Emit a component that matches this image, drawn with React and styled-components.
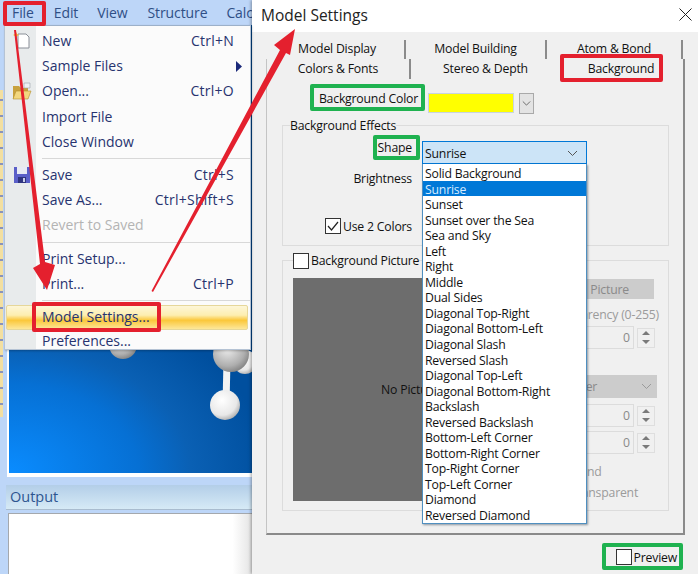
import React from "react";
import styled, { createGlobalStyle } from "styled-components";

const Global = createGlobalStyle`
  html, body { margin: 0; padding: 0; background: #f0f0f0; }
  * { box-sizing: border-box; }
  body { font-family: "Open Sans", "Noto Sans", "Liberation Sans", sans-serif; }
`;

const Page = styled.div`
  position: relative; width: 698px; height: 574px; overflow: hidden; display: flex;
`;
const LeftPane = styled.div`
  position: relative; width: 252px; flex: none; background: #bdd6f8; display: flex; flex-direction: column;
`;
const MenuBar = styled.div`
  height: 25px; flex: none; display: flex; align-items: center; padding-left: 12px; overflow: hidden; white-space: nowrap;
`;
const BarItem = styled.span`
  font-size: 14px; color: #2f4f86; letter-spacing: -0.1px; margin-right: ${p => p.$gap}px; flex: none;
`;
const Workspace = styled.div`
  height: 452px; flex: none; display: flex;
`;
const Strip = styled.div`
  width: 3px; height: 327px; margin-top: 65px; flex: none;
  background: repeating-linear-gradient(180deg, #f3dfa0 0 9px, #8a93b8 9px 11px, #f3dfa0 11px 16px);
`;
const Frame = styled.div`
  flex: 1; margin-left: 4px; border: solid #fff; border-width: 0 0 4px 2px; display: flex;
  background: radial-gradient(ellipse 260px 180px at 0% 100%, #0a8cff 0%, #0670d4 50%, #0a60b4 70%, #004f9e 100%) #004f9e;
`;
const Molecule = styled.svg`
  width: 100%; height: 100%; display: block;
`;
const OutputHead = styled.div`
  margin: 8px 0 0 6px; height: 25px; flex: none; padding: 0 0 2px 4px; display: flex; align-items: center;
  background: linear-gradient(180deg, #b3cee8, #d6eaf6); border-bottom: 1px solid #a9bccf;
  font-size: 14.5px; color: #2e5590;
`;
const OutputBox = styled.div`
  margin: 3px 0 0 8px; flex: 1; background: linear-gradient(90deg, #fff 92%, #e4e4e4 100%);
  border: 1px solid #a4a8ad; border-right: 0; border-bottom: 0;
`;

const Menu = styled.div`
  position: absolute; left: 4px; top: 25px; width: 247px; height: 325px; padding-top: 3px; overflow: hidden; z-index: 2;
  background: linear-gradient(90deg, #e8ebec 0 31px, #fbfbfb 31px);
  border: 1px solid #b5c3d4; border-top-color: #9cb0c9;
  box-shadow: 1px 1px 2px rgba(0,0,0,.25);
`;
const Row = styled.div`
  position: relative; height: 25.2px; display: flex; align-items: center; justify-content: space-between;
  padding: 0 16px 2px 37px; font-size: 14px;
  color: ${p => (p.$off ? "#b4b4b4" : "#27336f")};
  ${p => p.$hot && `
    margin: 0 2px 0 1px; padding-left: 35px; padding-right: 13px;
    background: linear-gradient(180deg, #fdf6d8 0%, #fdeeb0 40%, #fbc73a 62%, #fde79a 100%);
    border: 1px solid #e6d79a; border-radius: 2px;
  `}
  ${p => p.$last && "height: 19px; line-height: 17px; padding-top: 2px; padding-bottom: 0;"}
`;
const Key = styled.span`
  letter-spacing: 0.25px;
`;
const MenuIcon = styled.svg`
  position: absolute; left: 7px; top: 2px; width: 20px; height: 20px;
`;
const SubArrow = styled.svg`
  position: absolute; right: 7px; top: 7px; width: 8px; height: 11px;
`;
const Sep = styled.div`
  height: 8px; margin-left: 37px; display: flex; align-items: center;
  &::after { content: ""; flex: 1; height: 1px; background: #d8d8d8; }
`;

const Dialog = styled.div`
  flex: 1; display: flex; flex-direction: column; background: #f0f0f0; box-shadow: -1px 0 3px rgba(0,0,0,.35); z-index: 1;
`;
const TitleBar = styled.div`
  height: 32px; flex: none; background: #fff; display: flex; align-items: center; justify-content: space-between;
  padding: 0 6px 3px 9px; font-size: 15.5px; color: #222;
`;
const CloseIcon = styled.svg`
  width: 13px; height: 13px;
`;
const Tabs = styled.div`
  margin: 8px 0 0 14px; width: 419px; flex: none;
`;
const TabRow = styled.div`
  display: flex; height: ${p => p.$h}px; padding-left: ${p => p.$indent}px;
`;
const Tab = styled.div`
  width: ${p => p.$w}px; flex: none; display: flex; align-items: center; justify-content: center;
  font-size: 12.25px; color: #111; letter-spacing: -0.2px; padding-bottom: ${p => p.$lift}px;
  ${p => p.$bar && "border-right: 2px solid #8b8b8b;"}
`;
const Panel = styled.div`
  width: 419px; height: 476px; border: solid #8a8a8a; border-width: 0 2px 2px 1px; border-left-color: #c4c4c4;
`;
const ColorRow = styled.div`
  display: flex; align-items: center; margin: 14px 0 0 15px; height: 20px;
`;
const FieldLabel = styled.div`
  width: ${p => p.$w}px; flex: none; text-align: right; font-size: 12.25px; color: #111; letter-spacing: -0.2px; white-space: nowrap;
  padding-bottom: ${p => p.$lift || 0}px;
`;
const Swatch = styled.div`
  width: 86px; height: 20px; margin-left: 10px; background: #ffff00; border: 1px solid #c8d4de;
`;
const ColorButton = styled.div`
  width: 15px; height: 21px; margin-left: 5px; display: flex; align-items: center; justify-content: center;
  background: #e3e3e3; border: 1px solid #a9a9a9;
`;
const Group = styled.fieldset`
  margin: ${p => p.$top}px 16px 0 15px; padding: ${p => p.$pad}; border: 1px solid #dcdcdc; min-width: 0; width: 387px;
`;
const Legend = styled.legend`
  margin-left: ${p => p.$left}px; padding: 2px 0 0; font-size: 12.25px; line-height: 16px; color: #111; letter-spacing: -0.2px;
  display: flex; align-items: center; gap: 2px; white-space: nowrap;
`;
const Check = styled.span`
  width: 16px; height: 16px; flex: none; background: #fff; border: 1px solid #333; display: inline-flex; align-items: center; justify-content: center;
`;
const FormRow = styled.div`
  display: flex; align-items: center; margin-top: ${p => p.$top}px; height: ${p => p.$h}px;
`;
const Combo = styled.div`
  position: relative; width: 165px; height: 23px; margin-left: 10px; flex: none;
  background: #cce4f7; border: 1px solid #0078d7; display: flex; align-items: center; justify-content: space-between;
  padding: 2px 8px 0 2px; font-size: 12.25px; color: #111; letter-spacing: -0.2px;
`;
const List = styled.div`
  position: absolute; left: -1px; top: 22px; width: 165px; z-index: 3; background: #fff; padding-top: 1px;
  border: 1px solid #4f8fc0; border-top: 0; box-shadow: 1px 1px 2px rgba(40,60,80,.5);
`;
const Option = styled.div`
  height: 15.55px; line-height: 17.5px; padding-left: 2px; font-size: 12.25px; letter-spacing: -0.2px; white-space: nowrap;
  color: ${p => (p.$sel ? "#d8ecff" : "#111")}; background: ${p => (p.$sel ? "#0078d7" : "transparent")};
`;
const CheckRow = styled.div`
  display: flex; align-items: center; gap: 2px; margin: 32px 0 0 42px; height: 16px; font-size: 12.25px; color: #111; letter-spacing: -0.2px;
`;
const PictureBody = styled.div`
  display: flex;
`;
const Picture = styled.div`
  width: 234px; height: 223px; flex: none; background: #6d6d6d; display: flex; align-items: center; justify-content: center;
  font-size: 12.25px; color: #111; letter-spacing: -0.2px;
`;
const Side = styled.div`
  width: 122px; margin-left: 8px; flex: none; display: flex; flex-direction: column;
`;
const DisabledButton = styled.div`
  height: 20px; width: 119px; margin-top: 1px; background: #cccccc; display: flex; align-items: center; justify-content: center;
  font-size: 12.25px; color: #8a8a8a; letter-spacing: -0.2px;
`;
const DisabledText = styled.div`
  font-size: 12.25px; line-height: 16px; color: #9b9b9b; letter-spacing: -0.2px; white-space: nowrap;
  margin-top: ${p => p.$top}px; padding-left: ${p => p.$left}px;
`;
const Spinner = styled.div`
  display: flex; align-items: center; gap: 3px; height: 23px; margin-top: ${p => p.$top}px;
`;
const SpinInput = styled.div`
  width: 99px; height: 23px; background: #f0f0f0; border: 1px solid #dcdcdc; display: flex; align-items: center; justify-content: flex-end;
  padding-right: 3px; font-size: 12.25px; color: #8a8a8a;
`;
const SpinButtons = styled.div`
  width: 18px; height: 20px; display: flex; flex-direction: column; border: 1px solid #dedede;
`;
const SpinPart = styled.div`
  flex: 1; display: flex; align-items: center; justify-content: center;
  &::after {
    content: ""; border-left: 4px solid transparent; border-right: 4px solid transparent;
    ${p => (p.$down ? "border-top: 4px solid #7a7a7a;" : "border-bottom: 4px solid #7a7a7a;")}
  }
`;
const DisabledSelect = styled.div`
  height: 23px; width: 122px; margin-top: 26px; background: #cccccc; display: flex; align-items: center; justify-content: space-between;
  padding: 0 5px 0 25px; font-size: 12.25px; color: #8a8a8a; letter-spacing: -0.2px;
`;
const Footer = styled.div`
  flex: 1; display: flex; justify-content: flex-end; align-items: center; padding: 5px 21px 0 0;
  font-size: 12.25px; color: #111; gap: 2px; letter-spacing: -0.2px;
`;

const Overlay = styled.svg`
  position: absolute; inset: 0; width: 698px; height: 574px; z-index: 6; pointer-events: none;
`;
const Mark = styled.div`
  position: absolute; z-index: 5; pointer-events: none;
  left: ${p => p.$x}px; top: ${p => p.$y}px; width: ${p => p.$w}px; height: ${p => p.$h}px;
  border: 4px solid ${p => (p.$green ? "#1fb250" : "#e4202e")}; border-radius: 2px;
`;

const Chevron = ({ color = "#555", w = 11 }) => (
  <svg width={w} height="7" viewBox="0 0 11 7"><path d="M1 1l4.5 4.5L10 1" fill="none" stroke={color} strokeWidth="1" /></svg>
);
const Spin = ({ top }) => (
  <Spinner $top={top}>
    <SpinInput>0</SpinInput>
    <SpinButtons><SpinPart /><SpinPart $down /></SpinButtons>
  </Spinner>
);

const options = ["Solid Background","Sunrise","Sunset","Sunset over the Sea","Sea and Sky","Left","Right","Middle","Dual Sides","Diagonal Top-Right","Diagonal Bottom-Left","Diagonal Slash","Reversed Slash","Diagonal Top-Left","Diagonal Bottom-Right","Backslash","Reversed Backslash","Bottom-Left Corner","Bottom-Right Corner","Top-Right Corner","Top-Left Corner","Diamond","Reversed Diamond"];

export default function App() {
  return (
    <Page>
      <Global />
      <LeftPane>
        <MenuBar>
          <BarItem $gap={20}>File</BarItem>
          <BarItem $gap={19}>Edit</BarItem>
          <BarItem $gap={20}>View</BarItem>
          <BarItem $gap={19}>Structure</BarItem>
          <BarItem $gap={0}>Calc</BarItem>
        </MenuBar>
        <Workspace>
          <Strip />
          <Frame>
            <Molecule viewBox="0 0 243 448" preserveAspectRatio="none">
              <defs>
                <radialGradient id="gray" cx="40%" cy="35%" r="70%">
                  <stop offset="0%" stopColor="#eeeeee" /><stop offset="70%" stopColor="#aeaeae" /><stop offset="100%" stopColor="#7f7f7f" />
                </radialGradient>
                <radialGradient id="white" cx="40%" cy="35%" r="70%">
                  <stop offset="0%" stopColor="#ffffff" /><stop offset="70%" stopColor="#e8e8e8" /><stop offset="100%" stopColor="#a9a9a9" />
                </radialGradient>
              </defs>
              <circle cx="114" cy="320" r="14" fill="url(#gray)" />
              <circle cx="236" cy="337" r="12" fill="url(#white)" />
              <path d="M218 335l-1 45" stroke="#f3f3f3" strokeWidth="7" />
              <circle cx="222" cy="329" r="18" fill="url(#gray)" />
              <circle cx="216" cy="380" r="15" fill="url(#white)" />
            </Molecule>
          </Frame>
        </Workspace>
        <OutputHead>Output</OutputHead>
        <OutputBox />
        <Menu>
          <Row>
            <MenuIcon viewBox="0 0 20 20">
              <path d="M6 3h8l3 3v11H6z" fill="#fff" stroke="#8a8f98" />
              <path d="M4 1l1 2 2 1-2 1-1 2-1-2-2-1 2-1z" fill="#f4c430" />
            </MenuIcon>
            <span>New</span><Key>Ctrl+N</Key>
          </Row>
          <Row>
            <span>Sample Files</span>
            <SubArrow viewBox="0 0 8 11"><path d="M1 0l6 5.5L1 11z" fill="#1b2a7a" /></SubArrow>
          </Row>
          <Row>
            <MenuIcon viewBox="0 0 20 20">
              <path d="M1 5h6l2 2h7v11H1z" fill="#c9a23e" />
              <path d="M4 10h15l-3 8H1z" fill="#f2d77e" stroke="#b48d2c" strokeWidth=".6" />
              <path d="M12 2h6v5h-6z" fill="#eef1f4" stroke="#9aa3ad" strokeWidth=".6" />
            </MenuIcon>
            <span>Open...</span><Key>Ctrl+O</Key>
          </Row>
          <Row><span>Import File</span></Row>
          <Row><span>Close Window</span></Row>
          <Sep />
          <Row>
            <MenuIcon viewBox="0 0 20 20">
              <path d="M2 2h16v16H2z" fill="#5a5fc8" />
              <path d="M5 2h10v7H5z" fill="#e8ebf4" />
              <path d="M6 12h8v6H6z" fill="#2f347f" />
              <path d="M11 13h2v4h-2z" fill="#c9cde8" />
            </MenuIcon>
            <span>Save</span><Key>Ctrl+S</Key>
          </Row>
          <Row><span>Save As...</span><Key>Ctrl+Shift+S</Key></Row>
          <Row $off><span>Revert to Saved</span></Row>
          <Sep />
          <Row><span>Print Setup...</span></Row>
          <Row><span>Print...</span><Key>Ctrl+P</Key></Row>
          <Sep />
          <Row $hot><span>Model Settings...</span></Row>
          <Row $last><span>Preferences...</span></Row>
        </Menu>
      </LeftPane>

      <Dialog>
        <TitleBar>
          <span>Model Settings</span>
          <CloseIcon viewBox="0 0 13 13"><path d="M.5.5l12 12M12.5.5l-12 12" stroke="#222" strokeWidth="1" /></CloseIcon>
        </TitleBar>
        <Tabs>
          <TabRow $h={19} $indent={4}>
            <Tab $w={136} $lift={3} $bar>Model Display</Tab>
            <Tab $w={141} $lift={3} $bar>Model Building</Tab>
            <Tab $w={136} $lift={3} $bar>Atom &amp; Bond</Tab>
          </TabRow>
          <Panel>
            <TabRow $h={20} $indent={0}>
              <Tab $w={144} $lift={2} $bar>Colors &amp; Fonts</Tab>
              <Tab $w={149} $lift={2}>Stereo &amp; Depth</Tab>
              <Tab $w={122} $lift={2}>Background</Tab>
            </TabRow>
            <ColorRow>
              <FieldLabel $w={136} $lift={10}>Background Color</FieldLabel>
              <Swatch />
              <ColorButton><Chevron w={9} /></ColorButton>
            </ColorRow>
            <Group $top={3} $pad="7px 0 11px 0">
              <Legend $left={7}>Background Effects</Legend>
              <FormRow $top={0} $h={23}>
                <FieldLabel $w={129} $lift={10}>Shape</FieldLabel>
                <Combo>
                  <span>Sunrise</span>
                  <Chevron />
                  <List>
                    {options.map(o => <Option key={o} $sel={o === "Sunrise"}>{o}</Option>)}
                  </List>
                </Combo>
              </FormRow>
              <FormRow $top={6} $h={16}>
                <FieldLabel $w={129}>Brightness</FieldLabel>
              </FormRow>
              <CheckRow>
                <Check>
                  <svg width="12" height="10" viewBox="0 0 12 10"><path d="M1 5l3.5 4L11 1" fill="none" stroke="#222" strokeWidth="1.2" /></svg>
                </Check>
                Use 2 Colors
              </CheckRow>
            </Group>
            <Group $top={5} $pad="9px 0 9px 10px">
              <Legend $left={0}><Check />Background Picture</Legend>
              <PictureBody>
                <Picture>No Picture</Picture>
                <Side>
                  <DisabledButton>Load Picture</DisabledButton>
                  <DisabledText $top={8} $left={8}>Transparency (0-255)</DisabledText>
                  <Spin top={3} />
                  <DisabledSelect><span>Center</span><Chevron color="#9a9a9a" /></DisabledSelect>
                  <Spin top={6} />
                  <Spin top={4} />
                  <DisabledText $top={10} $left={0}>Background</DisabledText>
                  <DisabledText $top={5} $left={2}>Make Transparent</DisabledText>
                </Side>
              </PictureBody>
            </Group>
          </Panel>
        </Tabs>
        <Footer><Check />Preview</Footer>
      </Dialog>

      <Mark $x={3} $y={1} $w={43} $h={25} />
      <Mark $x={32} $y={302} $w={129} $h={30} />
      <Mark $x={560} $y={54} $w={103} $h={28} />
      <Mark $green $x={310} $y={84} $w={115} $h={27} />
      <Mark $green $x={373} $y={135} $w={47} $h={25} />
      <Mark $green $x={602} $y={543} $w={81} $h={27} />
      <Overlay viewBox="0 0 698 574">
        <path d="M14 30L16 30L45 262L55 265L47 290L33 268L40 264Z" fill="#e4202e" />
        <path d="M151.5 291L280 50L274 45L295 29L290 55L286 53L153 292Z" fill="#e4202e" />
      </Overlay>
    </Page>
  );
}
